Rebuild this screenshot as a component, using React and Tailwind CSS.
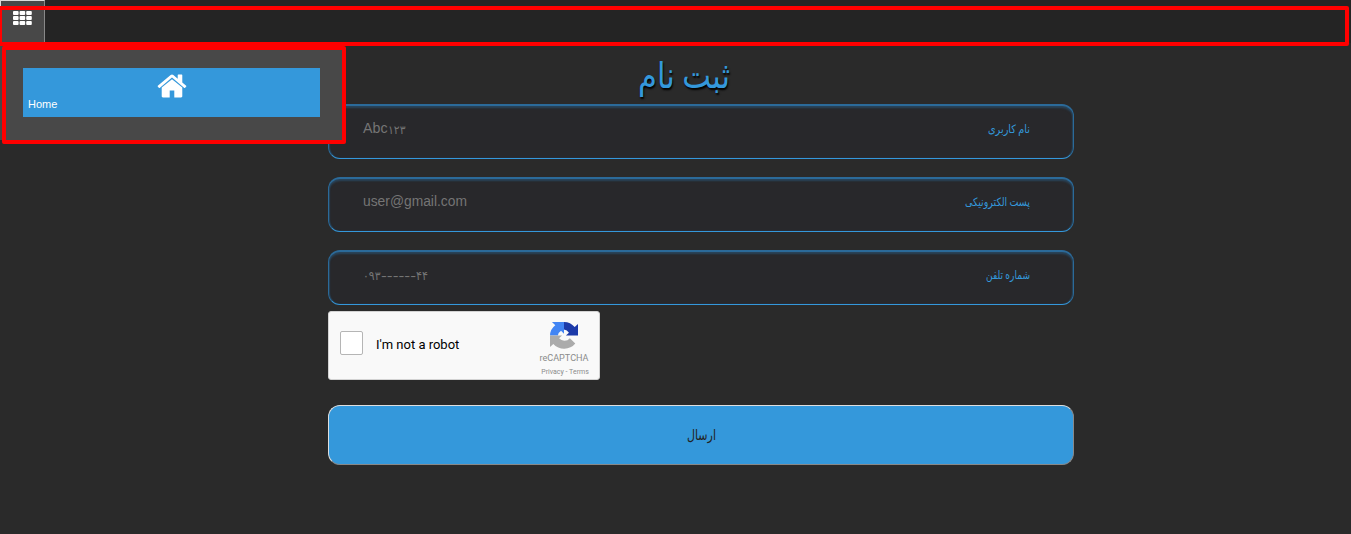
const fields = [
  {
    label: "نام کاربری",
    labelWidth: 42,
    hint: [
      { text: "Abc", width: 24.5, size: 14 },
      { text: "۱۲۳", width: 17.5, size: 12 },
    ],
  },
  {
    label: "پست الکترونیکی",
    labelWidth: 65,
    hint: [{ text: "user@gmail.com", width: 104, size: 14 }],
  },
  {
    label: "شماره تلفن",
    labelWidth: 44,
    hint: [
      { text: "۰۹۳", width: 17.5, size: 12 },
      { text: "------", width: 35, size: 12 },
      { text: "۴۴", width: 12, size: 12 },
    ],
  },
];

function FittedText({ text, width, height, size, baseline, className, rtl }) {
  return (
    <svg width={width} height={height} className={"block shrink-0 overflow-visible " + className}>
      <text
        x={rtl ? width : 0}
        y={baseline}
        direction={rtl ? "rtl" : "ltr"}
        textLength={width}
        lengthAdjust="spacingAndGlyphs"
        fontSize={size}
        fill="currentColor"
      >
        {text}
      </text>
    </svg>
  );
}

function Field({ label, hint, labelWidth }) {
  return (
    <div className="flex h-[55px] items-start justify-between rounded-[12px] border border-t-2 border-[#2b6a99] border-b-[#3498db] bg-[#28282b] pt-[13px] pr-[43px] pl-[34px] shadow-[inset_0_2px_2px_#29445a,inset_1px_0_1px_#29445a,inset_-1px_0_1px_#29445a]">
      <div className="flex">
        {hint.map((part) => (
          <FittedText key={part.text} {...part} height={20} baseline={part.size === 14 ? 14 : 15} className="font-['Liberation_Sans','DejaVu_Sans',sans-serif] text-[#757575]" />
        ))}
      </div>
      <FittedText text={label} width={labelWidth} height={20} size={11.5} baseline={14} rtl className="font-['Liberation_Serif','DejaVu_Sans',serif] text-[#3498db]" />
    </div>
  );
}

function GridIcon() {
  return (
    <svg width="19" height="15" viewBox="0 0 19 15" fill="currentColor">
      {[0, 5, 10].map((y) =>
        [0, 6.6, 13.2].map((x) => <rect key={x + "-" + y} x={x} y={y} width="5.6" height="4" rx="0.9" />)
      )}
    </svg>
  );
}

function HomeIcon() {
  return (
    <svg width="32" height="32" viewBox="0 0 1792 1792" fill="currentColor" className="mx-auto shrink-0">
      <path d="M1472 992v480q0 26-19 45t-45 19h-384v-384h-256v384h-384q-26 0-45-19t-19-45v-480q0-1 .5-3t.5-3l575-474 575 474q1 2 1 6zm223-69l-62 74q-8 9-21 11h-3q-13 0-21-7l-692-577-692 577q-12 8-24 7-13-2-21-11l-62-74q-8-10-7-23.5t11-21.5l719-599q32-26 76-26t76 26l244 204v-195q0-14 9-23t23-9h192q14 0 23 9t9 23v408l219 182q10 8 11 21.5t-7 23.5z" />
    </svg>
  );
}

function CaptchaLogo() {
  return (
    <svg width="28" height="27" viewBox="0 0 64 64" preserveAspectRatio="none">
      <path fill="#1c3aa9" d="M64 32V4.5l-7.6 7.6A31.9 31.9 0 0 0 32 0v18a16 16 0 0 1 11.3 7.2L36.4 32z" />
      <path fill="#4285f4" d="M32 0H4.5l7.6 7.6A31.9 31.9 0 0 0 0 32h18a16 16 0 0 1 7.2-11.3l6.8 6.9z" />
      <path fill="#ababab" d="M0 32v27.5l7.6-7.6A32 32 0 0 0 57.8 50.8L45.4 38.3A16 16 0 0 1 20.7 38.8L27.5 32z" />
    </svg>
  );
}

function Captcha() {
  return (
    <div className="mt-[6px] flex h-[69px] w-[272px] items-center rounded-[3px] border border-[#d3d3d3] bg-[#f9f9f9] font-[Roboto,sans-serif]">
      <div className="mb-[5px] ml-[11px] h-6 w-[23px] rounded-[2px] border border-[#b5b5b5] bg-white" />
      <div className="mb-[2px] ml-[13px] text-[13px] leading-4 text-black">I'm not a robot</div>
      <div className="mr-[10px] ml-auto flex w-[50px] flex-col items-center self-start pt-[10px] whitespace-nowrap text-[#8b8b8b]">
        <CaptchaLogo />
        <div className="mt-[3px] text-[9.1px] leading-3">reCAPTCHA</div>
        <div className="mt-[3px] ml-[2px] text-[7px] leading-[10px]">Privacy - Terms</div>
      </div>
    </div>
  );
}

export default function App() {
  return (
    <div className="relative h-[534px] w-[1351px] overflow-hidden bg-[#2a2a2a]">
      <header className="flex h-[43px] bg-[#242424]">
        <button className="flex h-[43px] w-[45px] items-start justify-center border-t border-r border-l border-t-[#dadada] border-r-[#888] border-l-[#dadada] bg-[#484848] pt-[10px] text-white">
          <GridIcon />
        </button>
      </header>

      <main className="ml-[328px] w-[746px]">
        <h1 className="flex h-[61px] justify-end pt-[17px] pr-[344px]">
          <FittedText text="ثبت نام" width={92} height={40} size={36} baseline={28} rtl className="font-['Liberation_Serif','DejaVu_Sans',serif] text-[#3498db] [text-shadow:1px_2px_2px_#000]" />
        </h1>
        <div className="flex flex-col gap-[18px]">
          {fields.map((f) => (
            <Field key={f.label} {...f} />
          ))}
        </div>
        <Captcha />
        <button className="mt-[25px] flex h-[60px] w-full items-center justify-center rounded-[12px] border border-t-[#dedede] border-r-[#888] border-b-[#888] border-l-[#dedede] bg-[#3498db]">
          <FittedText text="ارسال" width={29} height={20} size={15} baseline={15} rtl className="font-['Liberation_Serif','DejaVu_Sans',serif] text-[#222]" />
        </button>
      </main>

      <nav className="absolute top-[43px] left-0 h-[97px] w-[343px] bg-[#484848] pt-[25px] pl-[23px]">
        <a className="flex h-[49px] w-[297px] flex-col bg-[#3498db] pt-[2px] text-white">
          <HomeIcon />
          <span className="-mt-[4px] pl-[5px] font-['Liberation_Sans',sans-serif] text-[11px] leading-3">Home</span>
        </a>
      </nav>
      <div className="absolute top-[6px] -left-[2px] h-[40px] w-[1351px] rounded-[2px] border-4 border-[#f00]" />
      <div className="absolute top-[46px] left-[2px] h-[98px] w-[344px] rounded-[2px] border-4 border-[#f00]" />
    </div>
  );
}
